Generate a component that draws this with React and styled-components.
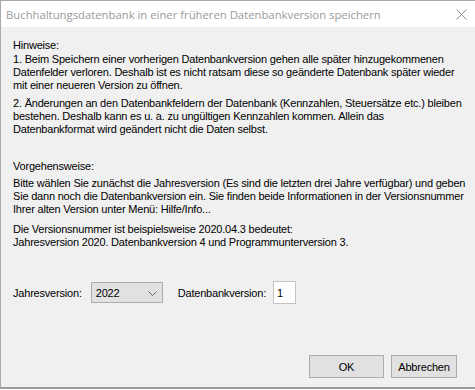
import styled, { createGlobalStyle } from 'styled-components';

const Global = createGlobalStyle`
  html, body {
    margin: 0;
    padding: 0;
    background: #ffffff;
  }
`;

const Window = styled.div`
  box-sizing: border-box;
  width: 475px;
  height: 389px;
  display: flex;
  flex-direction: column;
  border-top: 1px solid #a9a9a9;
  border-left: 1px solid #a9a9a9;
  border-bottom: 2px solid #9c9c9c;
  background: #f0f0f0;
  font-family: 'Liberation Sans', Arial, sans-serif;
  font-size: 11px;
  letter-spacing: -0.2px;
  color: #000;
`;

const TitleBar = styled.div`
  height: 26px;
  flex: none;
  display: flex;
  align-items: center;
  justify-content: space-between;
  padding: 0 8px 0 5px;
  background: #fff;
`;

const Title = styled.span`
  font-family: 'Open Sans', 'Noto Sans', sans-serif;
  font-size: 11.3px;
  color: #9a9a9a;
  letter-spacing: 0;
`;

const Body = styled.div`
  flex: 1;
  display: flex;
  flex-direction: column;
  padding: 12px 12px 9px 12px;
`;

const Text = styled.p`
  margin: ${(p) => p.$top || 0}px 0 0 0;
  line-height: 13px;
  white-space: nowrap;
`;

const Row = styled.div`
  display: flex;
  align-items: center;
  margin-top: 32px;
`;

const Label = styled.span`
  margin-right: ${(p) => p.$gap}px;
`;

const Combo = styled.div`
  box-sizing: border-box;
  width: 72px;
  height: 21px;
  display: flex;
  align-items: center;
  justify-content: space-between;
  padding: 1px 5px 0 4px;
  background: #e1e1e1;
  border: 1px solid #adadad;
  margin-right: 15px;
`;

const Field = styled.div`
  box-sizing: border-box;
  width: 23px;
  height: 23px;
  display: flex;
  align-items: center;
  padding: 1px 0 0 3px;
  background: #fff;
  border: 1px solid #c4c4c4;
`;

const Footer = styled.div`
  margin-top: auto;
  display: flex;
  justify-content: flex-end;
  gap: 7px;
  padding-right: 6px;
`;

const Button = styled.button`
  box-sizing: border-box;
  width: ${(p) => p.$w}px;
  height: 23px;
  padding: 0;
  background: #e1e1e1;
  border: 1px solid #adadad;
  font-family: inherit;
  font-size: 11px;
  letter-spacing: -0.2px;
  color: #000;
`;

const Close = () => (
  <svg width="11" height="11" viewBox="0 0 11 11">
    <path d="M0.5 0.5 L10.5 10.5 M10.5 0.5 L0.5 10.5" stroke="#8a8a8a" strokeWidth="1" />
  </svg>
);

const Chevron = () => (
  <svg width="9" height="5" viewBox="0 0 9 5">
    <path d="M0.5 0.5 L4.5 4.5 L8.5 0.5" stroke="#606060" fill="none" strokeWidth="1" />
  </svg>
);

export default function App() {
  return (
    <>
      <Global />
      <Window>
        <TitleBar>
          <Title>Buchhaltungsdatenbank in einer früheren Datenbankversion speichern</Title>
          <Close />
        </TitleBar>
        <Body>
          <Text>Hinweise:</Text>
          <Text $top={1}>
            1. Beim Speichern einer vorherigen Datenbankversion gehen alle später hinzugekommenen
            <br />
            Datenfelder verloren. Deshalb ist es nicht ratsam diese so geänderte Datenbank später wieder
            <br />
            mit einer neueren Version zu öffnen.
          </Text>
          <Text $top={5}>
            2. Änderungen an den Datenbankfeldern der Datenbank (Kennzahlen, Steuersätze etc.) bleiben
            <br />
            bestehen. Deshalb kann es u. a. zu ungültigen Kennzahlen kommen. Allein das
            <br />
            Datenbankformat wird geändert nicht die Daten selbst.
          </Text>
          <Text $top={24}>Vorgehensweise:</Text>
          <Text $top={4}>
            Bitte wählen Sie zunächst die Jahresversion (Es sind die letzten drei Jahre verfügbar) und geben
            <br />
            Sie dann noch die Datenbankversion ein. Sie finden beide Informationen in der Versionsnummer
            <br />
            Ihrer alten Version unter Menü: Hilfe/Info...
          </Text>
          <Text $top={7}>
            Die Versionsnummer ist beispielsweise 2020.04.3 bedeutet:
            <br />
            Jahresversion 2020. Datenbankversion 4 und Programmunterversion 3.
          </Text>
          <Row>
            <Label $gap={9}>Jahresversion:</Label>
            <Combo>
              <span>2022</span>
              <Chevron />
            </Combo>
            <Label $gap={7}>Datenbankversion:</Label>
            <Field>1</Field>
          </Row>
          <Footer>
            <Button $w={75}>OK</Button>
            <Button $w={66}>Abbrechen</Button>
          </Footer>
        </Body>
      </Window>
    </>
  );
}
